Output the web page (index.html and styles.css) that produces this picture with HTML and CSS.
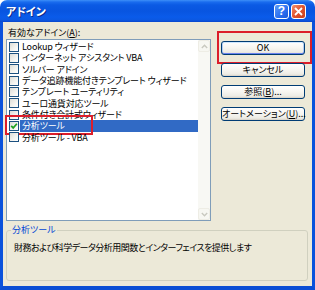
FILE: index.html
```html
<!DOCTYPE html>
<html lang="ja">
<head>
<meta charset="utf-8">
<title>アドイン</title>
<link rel="stylesheet" href="styles.css">
</head>
<body>
<div class="window">
  <div class="titlebar">
    <span class="title">アドイン</span>
    <div class="tbtns">
      <span class="tbtn help">?</span>
      <span class="tbtn close"><svg width="9" height="9" viewBox="0 0 9 9"><path d="M1 1 L8 8 M8 1 L1 8" stroke="#fff" stroke-width="1.8" fill="none"/></svg></span>
    </div>
  </div>
  <div class="frame">
    <div class="main">
      <div class="left">
        <div class="label">有効なアドイン(<u>A</u>):</div>
        <div class="listbox">
          <div class="items">
            <div class="item"><span class="cb"></span><span class="txt">Lookup ウィザード</span></div>
            <div class="item"><span class="cb"></span><span class="txt">インターネット アシスタント VBA</span></div>
            <div class="item"><span class="cb"></span><span class="txt">ソルバー アドイン</span></div>
            <div class="item"><span class="cb"></span><span class="txt">データ追跡機能付きテンプレート ウィザード</span></div>
            <div class="item"><span class="cb"></span><span class="txt">テンプレート ユーティリティ</span></div>
            <div class="item"><span class="cb"></span><span class="txt">ユーロ通貨対応ツール</span></div>
            <div class="item"><span class="cb"></span><span class="txt">条件付き合計式ウィザード</span></div>
            <div class="item selected"><span class="cb checked"><svg width="8" height="8" viewBox="0 0 8 8"><path d="M1.2 3.8 L3.2 5.9 L6.9 1.8" stroke="#21A121" stroke-width="1.7" fill="none"/></svg></span><span class="txt">分析ツール</span><span class="mark mark-row"></span></div>
            <div class="item"><span class="cb"></span><span class="txt">分析ツール - VBA</span></div>
          </div>
          <div class="scrollbar">
            <div class="sb-btn"><svg width="7" height="5" viewBox="0 0 7 5"><path d="M0.8 4 L3.5 1.3 L6.2 4" stroke="#c9c9c0" stroke-width="1.4" fill="none"/></svg></div>
            <div class="sb-track"></div>
            <div class="sb-btn"><svg width="7" height="5" viewBox="0 0 7 5"><path d="M0.8 1 L3.5 3.7 L6.2 1" stroke="#c9c9c0" stroke-width="1.4" fill="none"/></svg></div>
          </div>
        </div>
      </div>
      <div class="buttons">
        <div class="btnwrap"><span class="btn default">OK</span><span class="mark mark-ok"></span></div>
        <div class="btnwrap"><span class="btn">キャンセル</span></div>
        <div class="btnwrap"><span class="btn">参照(<u>B</u>)...</span></div>
        <div class="btnwrap"><span class="btn">オートメーション(<u>U</u>)...</span></div>
      </div>
    </div>
    <fieldset class="group">
      <legend>分析ツール</legend>
      <p class="desc">財務および科学データ分析用関数とインターフェイスを提供します</p>
    </fieldset>
  </div>
</div>
</body>
</html>
```
FILE: styles.css
```css
* { box-sizing: border-box; margin: 0; padding: 0; }
html, body { width: 315px; height: 290px; overflow: hidden; background: #ffffff; }
body {
  font-family: "Noto Sans CJK JP", "Noto Sans", sans-serif;
  font-size: 9px;
  font-feature-settings: "palt";
  color: #000;
}
.window {
  width: 315px;
  height: 290px;
  display: flex;
  flex-direction: column;
  border-radius: 7px 7px 0 0;
  overflow: hidden;
}
.titlebar {
  height: 22px;
  flex: none;
  display: flex;
  align-items: center;
  justify-content: space-between;
  padding: 0 9px 0 6px;
  background: linear-gradient(to bottom, #3d8ff8 0px, #1a6cee 2px, #0b5ae4 5px, #0855e0 11px, #0a5bea 17px, #0b58e2 20px, #0846cc 22px);
}
.title {
  color: #fff;
  font-size: 11px;
  font-weight: bold;
  line-height: 22px;
  text-shadow: 1px 1px 0 #0a2a8a;
}
.tbtns { display: flex; gap: 2px; }
.tbtn {
  width: 15px;
  height: 15px;
  border: 1px solid #fff;
  border-radius: 3px;
  display: flex;
  align-items: center;
  justify-content: center;
  color: #fff;
  font-family: "Liberation Sans", sans-serif;
  font-weight: bold;
  font-size: 12px;
  line-height: 1;
}
.help { background: linear-gradient(135deg, #5d9bf8, #2a6ff0 60%, #1b58d8); }
.close { background: linear-gradient(135deg, #f09070, #e0542e 50%, #c8401e); }

.frame {
  flex: 1;
  display: flex;
  flex-direction: column;
  background: #ece9d8;
  border-left: 3px solid #0a52dc;
  border-right: 3px solid #0a52dc;
  border-bottom: 4px solid #0a4ed4;
  padding: 5px 4px 5px 3px;
}
.main { display: flex; gap: 10px; align-items: flex-start; }
.left { width: 205px; flex: none; }
.label {
  height: 11px;
  line-height: 11px;
  margin-bottom: 1px;
  padding-left: 2px;
  white-space: nowrap;
}
.label u, .btn u { text-decoration: underline; }
.listbox {
  height: 182px;
  border: 1px solid #7f9db9;
  background: #fff;
  display: flex;
}
.items { flex: 1; padding-top: 1px; position: relative; }
.item {
  height: 11.33px;
  display: flex;
  align-items: center;
  position: relative;
}
.cb {
  width: 10px;
  height: 10px;
  margin-left: 2px;
  flex: none;
  border: 1px solid #1c5180;
  background: linear-gradient(135deg, #dcdcd7, #f4f4f0 60%, #ffffff);
  display: flex;
  align-items: center;
  justify-content: center;
}
.txt {
  flex: 1;
  margin-left: 1px;
  padding-left: 2px;
  line-height: 11.33px;
  height: 11.33px;
  white-space: nowrap;
  overflow: hidden;
  letter-spacing: -0.15px;
}
.selected .txt { background: #316ac5; color: #fff; }
.mark {
  position: absolute;
  border: 2px solid #dc1e2a;
  pointer-events: none;
}
.mark-row { left: -2px; top: -5px; width: 88px; height: 20px; }
.scrollbar {
  width: 12px;
  flex: none;
  display: flex;
  flex-direction: column;
  background: #f8f8f4;
}
.sb-btn {
  height: 12px;
  flex: none;
  border: 1px solid #eeede5;
  border-radius: 2px;
  background: #f7f7f2;
  display: flex;
  align-items: center;
  justify-content: center;
}
.sb-track { flex: 1; }
.buttons {
  width: 84px;
  flex: none;
  display: flex;
  flex-direction: column;
  gap: 8px;
  margin-top: 14px;
}
.btnwrap { position: relative; height: 14px; }
.btn {
  display: block;
  height: 14px;
  border: 1px solid #003c74;
  border-radius: 3px;
  background: linear-gradient(to bottom, #ffffff 0%, #f6f5f0 50%, #ecebe4 85%, #d6d0c5 100%);
  text-align: center;
  line-height: 12px;
  white-space: nowrap;
}
.btn.default { box-shadow: inset 0 1px 0 #cee7ff, inset 0 -1px 0 #6982ee, inset 1px 0 0 #b2cdf4, inset -1px 0 0 #b2cdf4; }
.mark-ok { left: -4px; top: -10px; right: -7px; bottom: -9px; }

.group {
  margin-top: 4px;
  height: 56px;
  border: 1px solid #d0d0bf;
  border-radius: 3px;
  padding: 0 4px;
  min-width: 0;
}
.group legend {
  color: #0046d5;
  line-height: 10px;
  padding: 0 1px;
}
.desc {
  margin-top: 7px;
  margin-left: 3px;
  line-height: 11px;
  white-space: nowrap;
  letter-spacing: -0.5px;
}
```
